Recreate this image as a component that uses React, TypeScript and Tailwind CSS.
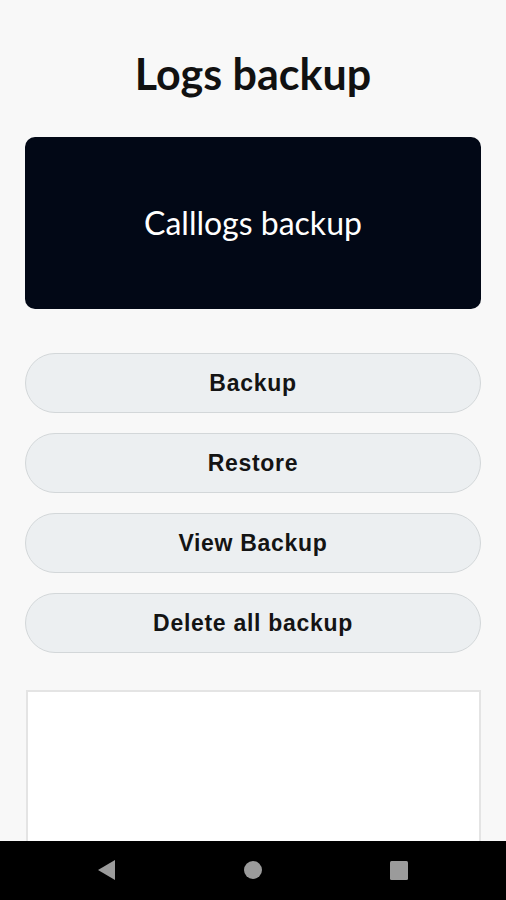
import React from 'react';

const actions = ['Backup', 'Restore', 'View Backup', 'Delete all backup'];

const App: React.FC = () => {
    return (
        <div className="h-[900px] w-full flex flex-col bg-[#f8f8f8] overflow-hidden">
            {/* Content */}
            <div className="flex-1 flex flex-col px-[25px] min-h-0">
                <h1 className="pt-[47px] text-center text-[43px] leading-[54px] font-bold text-[#111] font-['Lato',sans-serif]">
                    Logs backup
                </h1>
                {/* Header card */}
                <div className="mt-[36px] h-[172px] rounded-[10px] bg-[#020816] flex items-center justify-center">
                    <span className="text-white text-[32px] font-['Lato',sans-serif]">Calllogs backup</span>
                </div>
                {/* Buttons */}
                <div className="mt-[44px] flex flex-col gap-[20px]">
                    {actions.map((label) => (
                        <button
                            key={label}
                            className="h-[60px] w-full rounded-full border border-[#d3d7d9] bg-[#eceff1] text-[23px] font-bold tracking-[0.7px] text-[#141414] font-['Liberation_Sans',Arial,sans-serif]"
                        >
                            {label}
                        </button>
                    ))}
                </div>
                {/* Log output */}
                <div className="mt-[37px] flex-1 ml-[1px] border-2 border-b-0 border-[#e4e4e4] bg-white" />
            </div>
            {/* Nav bar */}
            <div className="h-[59px] bg-black flex items-center justify-center gap-[126px] pb-[2px]">
                <svg width="20" height="22" viewBox="0 0 20 22">
                    <polygon points="18,1 18,21 1,11" fill="#9b9b9b" />
                </svg>
                <svg width="20" height="20" viewBox="0 0 20 20">
                    <circle cx="10" cy="10" r="9" fill="#9b9b9b" />
                </svg>
                <svg width="20" height="20" viewBox="0 0 20 20">
                    <rect x="1" y="1" width="18" height="19" rx="1.5" fill="#9b9b9b" />
                </svg>
            </div>
        </div>
    );
};

export default App;
